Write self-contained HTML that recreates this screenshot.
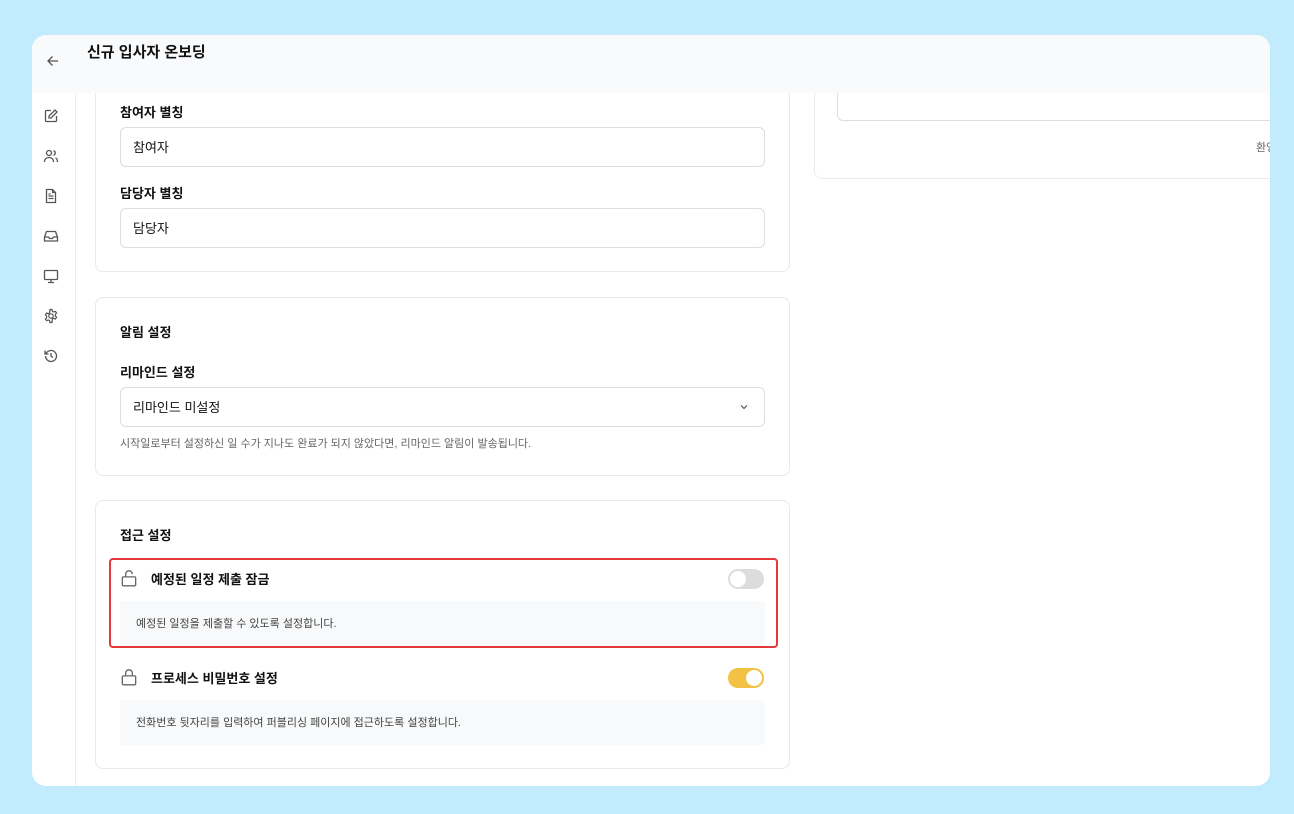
<!DOCTYPE html>
<html><head><meta charset="utf-8"><style>
*{box-sizing:border-box;margin:0;padding:0}
body{width:1294px;height:814px;background:#c2ebfd;font-family:"Liberation Sans","Noto Sans CJK KR",sans-serif;position:relative;overflow:hidden;color:#111}
.frame{position:absolute;left:32px;top:35px;width:1238px;height:751px;background:#fff;border-radius:14px;overflow:hidden}
.hdr{position:absolute;left:0;top:0;width:100%;height:58px;background:#f9fafb;z-index:5}
.hdr .t{position:absolute;left:55px;top:6px;font-size:15px;font-weight:bold}
.side{position:absolute;left:0;top:58px;width:44px;bottom:0;border-right:1px solid #eceef0}
.side svg{position:absolute;left:11px}
.card{position:absolute;background:#fff;border:1px solid #e8e9eb;border-radius:8px}
.lbl{position:absolute;font-size:13px;font-weight:bold}
.inp{position:absolute;left:24px;width:645px;height:40px;border:1px solid #dcdde0;border-radius:6px;font-size:13px;padding:9px 12px}
.help{position:absolute;font-size:11px;color:#666}
.desc{position:absolute;left:24px;width:645px;height:45px;background:#f8f9fa;border-radius:4px;font-size:11px;color:#444;padding:14px 16px}
.tog{position:absolute;width:36px;height:20px;border-radius:10px}
.tog i{position:absolute;top:2px;width:16px;height:16px;border-radius:50%;background:#fff}
</style></head><body>
<div class="frame">
<div class="hdr">
<svg style="position:absolute;left:14px;top:19px" width="14" height="14" viewBox="0 0 14 14" fill="none" stroke="#555" stroke-width="1.3"><path d="M12 7H2M6.5 2.5L2 7l4.5 4.5"/></svg>
<div class="t">신규 입사자 온보딩</div>
</div>
<div class="side">
<svg style="top:15px" width="16" height="16" viewBox="0 0 16 16" fill="none" stroke="#555" stroke-width="1.3"><path d="M8 2.5H3.5a1 1 0 0 0-1 1v9a1 1 0 0 0 1 1h9a1 1 0 0 0 1-1V8"/><path d="M12 2l2 2-6 6H6V8z"/></svg>
<svg style="top:55px" width="16" height="16" viewBox="0 0 16 16" fill="none" stroke="#555" stroke-width="1.3"><circle cx="6" cy="5" r="2.5"/><path d="M1.5 14c0-3 2-4.5 4.5-4.5s4.5 1.5 4.5 4.5M10.5 2.7a2.4 2.4 0 0 1 0 4.6M12.5 9.8c1.3.6 2 2 2 4.2"/></svg>
<svg style="top:95px" width="16" height="16" viewBox="0 0 16 16" fill="none" stroke="#555" stroke-width="1.3"><path d="M3.5 1.5h6l3 3v10h-9z"/><path d="M9.5 1.5v3h3M5.5 8h5M5.5 10.5h5M5.5 6h2"/></svg>
<svg style="top:135px" width="16" height="16" viewBox="0 0 16 16" fill="none" stroke="#555" stroke-width="1.3"><path d="M1.5 9l2-5.5h9l2 5.5v4h-13z"/><path d="M1.5 9h4l1 1.5h3l1-1.5h4"/></svg>
<svg style="top:175px" width="16" height="16" viewBox="0 0 16 16" fill="none" stroke="#555" stroke-width="1.3"><rect x="1.5" y="2.5" width="13" height="9" rx="1"/><path d="M8 11.5v3M5 14.5h6"/></svg>
<svg style="top:215px" width="16" height="16" viewBox="0 0 16 16" fill="none" stroke="#555" stroke-width="1.2"><circle cx="8" cy="8" r="2.2"/><path d="M7 1.5h2l.4 1.8 1.3.7 1.7-.7 1.2 1.7-1.2 1.4v1.5l1.2 1.4-1.2 1.7-1.7-.7-1.3.7L9 14.5H7l-.4-1.8-1.3-.7-1.7.7-1.2-1.7 1.2-1.4V8.1L2.4 6.7l1.2-1.7 1.7.7 1.3-.7z"/></svg>
<svg style="top:255px" width="16" height="16" viewBox="0 0 16 16" fill="none" stroke="#555" stroke-width="1.3"><path d="M2.5 8a5.5 5.5 0 1 0 1.6-3.9L2 6"/><path d="M2 2.5V6h3.5M8 5v3.2l2 1.3"/></svg>
</div>

<div class="card" style="left:63px;top:20px;width:695px;height:217px">
<div class="lbl" style="left:24px;top:46px">참여자 별칭</div>
<div class="inp" style="top:71px">참여자</div>
<div class="lbl" style="left:24px;top:127px">담당자 별칭</div>
<div class="inp" style="top:152px">담당자</div>
</div>

<div class="card" style="left:782px;top:20px;width:480px;height:124px">
<div style="position:absolute;left:22px;top:0;width:470px;height:65px;border:1px solid #dcdde0;border-radius:6px"></div>
<div class="help" style="left:441px;top:83px">환영</div>
</div>

<div class="card" style="left:63px;top:262px;width:695px;height:179px">
<div class="lbl" style="left:24px;top:24px">알림 설정</div>
<div class="lbl" style="left:24px;top:64px">리마인드 설정</div>
<div class="inp" style="top:89px">리마인드 미설정
<svg style="position:absolute;right:14px;top:13px" width="12" height="12" viewBox="0 0 12 12" fill="none" stroke="#666" stroke-width="1.3"><path d="M3 4.5l3 3 3-3"/></svg></div>
<div class="help" style="left:24px;top:137px">시작일로부터 설정하신 일 수가 지나도 완료가 되지 않았다면, 리마인드 알림이 발송됩니다.</div>
</div>

<div class="card" style="left:63px;top:465px;width:695px;height:269px">
<div class="lbl" style="left:24px;top:24px">접근 설정</div>
<svg style="position:absolute;left:23px;top:67px" width="20" height="20" viewBox="0 0 18 18" fill="none" stroke="#666" stroke-width="1.2"><rect x="3" y="8" width="12" height="8" rx="1"/><path d="M6 8V5.5a3 3 0 0 1 6 0"/></svg>
<div class="lbl" style="left:55px;top:68px">예정된 일정 제출 잠금</div>
<div class="tog" style="left:632px;top:68px;background:#dcdcdc"><i style="left:2px"></i></div>
<div class="desc" style="top:100px">예정된 일정을 제출할 수 있도록 설정합니다.</div>
<svg style="position:absolute;left:23px;top:166px" width="20" height="20" viewBox="0 0 18 18" fill="none" stroke="#666" stroke-width="1.2"><rect x="3" y="8" width="12" height="8" rx="1"/><path d="M6 8V5.5a3 3 0 0 1 6 0V8"/></svg>
<div class="lbl" style="left:55px;top:167px">프로세스 비밀번호 설정</div>
<div class="tog" style="left:632px;top:167px;background:#f3c244"><i style="left:18px"></i></div>
<div class="desc" style="top:199px">전화번호 뒷자리를 입력하여 퍼블리싱 페이지에 접근하도록 설정합니다.</div>
</div>
<div style="position:absolute;left:77px;top:523px;width:669px;height:90px;border:2px solid #e5383b;border-radius:4px"></div>
</div>
</body></html>
